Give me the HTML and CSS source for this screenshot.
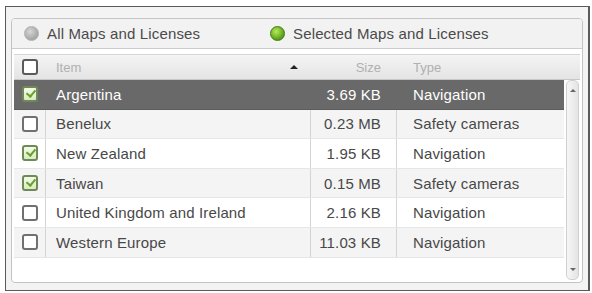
FILE: index.html
```html
<!DOCTYPE html>
<html lang="en">
<head>
    <meta charset="UTF-8">
    <title>Maps and Licenses</title>
    <link rel="stylesheet" href="styles.css">
</head>
<body>
    <div class="frame">
        <div class="panel">
            <div class="filter">
                <label class="option"><span class="radio"></span>All Maps and Licenses</label>
                <label class="option"><span class="radio on"></span>Selected Maps and Licenses</label>
            </div>
            <div class="grid">
                <div class="head">
                    <div class="c-check"><span class="box"></span></div>
                    <div class="c-item">Item <span class="sort"></span></div>
                    <div class="c-size">Size</div>
                    <div class="c-type">Type</div>
                </div>
                <div class="body">
                    <div class="rows">
                        <div class="row selected">
                            <div class="c-check"><span class="box checked"></span></div>
                            <div class="c-item">Argentina</div>
                            <div class="c-size">3.69 KB</div>
                            <div class="c-type">Navigation</div>
                        </div>
                        <div class="row">
                            <div class="c-check"><span class="box"></span></div>
                            <div class="c-item">Benelux</div>
                            <div class="c-size">0.23 MB</div>
                            <div class="c-type">Safety cameras</div>
                        </div>
                        <div class="row">
                            <div class="c-check"><span class="box checked"></span></div>
                            <div class="c-item">New Zealand</div>
                            <div class="c-size">1.95 KB</div>
                            <div class="c-type">Navigation</div>
                        </div>
                        <div class="row">
                            <div class="c-check"><span class="box checked"></span></div>
                            <div class="c-item">Taiwan</div>
                            <div class="c-size">0.15 MB</div>
                            <div class="c-type">Safety cameras</div>
                        </div>
                        <div class="row">
                            <div class="c-check"><span class="box"></span></div>
                            <div class="c-item">United Kingdom and Ireland</div>
                            <div class="c-size">2.16 KB</div>
                            <div class="c-type">Navigation</div>
                        </div>
                        <div class="row">
                            <div class="c-check"><span class="box"></span></div>
                            <div class="c-item">Western Europe</div>
                            <div class="c-size">11.03 KB</div>
                            <div class="c-type">Navigation</div>
                        </div>
                        <div class="filler"></div>
                    </div>
                    <div class="scrollbar">
                        <span class="arrow up"></span>
                        <span class="arrow down"></span>
                    </div>
                </div>
            </div>
        </div>
    </div>
</body>
</html>
```

FILE: styles.css
```css
body {
    margin: 0;
    background-color: #ffffff;
    font-family: "Liberation Sans", Arial, sans-serif;
    font-size: 15px;
    letter-spacing: 0.15px;
    color: #484848;
}

.frame {
    box-sizing: border-box;
    margin: 6px 2px 0 5px;
    height: 285px;
    border: 1px solid #5a5a5a;
    border-right-width: 2px;
    background-color: #f3f3f3;
    padding: 11px 5px 7px 5px;
}

.panel {
    height: 100%;
    box-sizing: border-box;
    border: 1px solid #c4c4c4;
    border-radius: 4px;
    background-color: #ffffff;
    display: flex;
    flex-direction: column;
    overflow: hidden;
}

.filter {
    display: flex;
    align-items: center;
    height: 29px;
    flex-shrink: 0;
    background-color: #f2f2f2;
    border-bottom: 1px solid #cccccc;
}

.option {
    display: flex;
    align-items: center;
    gap: 8px;
    color: #4a4a4a;
}

.option:first-child {
    margin-left: 12px;
    width: 246px;
}

.radio {
    width: 15px;
    height: 15px;
    border-radius: 50%;
    background: radial-gradient(circle at 40% 35%, #d6d6d6, #a6a6a6 70%);
    border: 1px solid #b0b0b0;
    box-sizing: border-box;
}

.radio.on {
    background: radial-gradient(circle at 40% 35%, #b8ea5a, #4f9a12 75%);
    border-color: #3f7a10;
}

.grid {
    flex: 1;
    display: flex;
    flex-direction: column;
    margin: 5px 2px 0 2px;
}

.head, .row {
    display: flex;
    align-items: center;
}

.head {
    height: 24px;
    flex-shrink: 0;
    background: linear-gradient(#f4f4f4, #e4e4e4);
    border-top: 1px solid #d6d6d6;
    border-bottom: 1px solid #c8c8c8;
    color: #b0b0b0;
    font-size: 13px;
    letter-spacing: 0;
}

.c-check {
    width: 32px;
    height: 100%;
    display: flex;
    align-items: center;
    justify-content: center;
    border-right: 1px solid #d4d4d4;
    box-sizing: border-box;
}

.c-item {
    width: 265px;
    padding-left: 10px;
    box-sizing: border-box;
    height: 100%;
    display: flex;
    align-items: center;
    justify-content: space-between;
    padding-right: 12px;
    border-right: 1px solid #d4d4d4;
}

.c-size {
    width: 86px;
    padding-right: 15px;
    box-sizing: border-box;
    height: 100%;
    display: flex;
    align-items: center;
    justify-content: flex-end;
    border-right: 1px solid #d4d4d4;
}

.c-type {
    padding-left: 16px;
}

.head .c-check, .head .c-item, .head .c-size {
    border-right-color: transparent;
}

.sort {
    width: 0;
    height: 0;
    border-left: 4px solid transparent;
    border-right: 4px solid transparent;
    border-bottom: 4px solid #222222;
}

.box {
    width: 16px;
    height: 16px;
    border: 2px solid #707070;
    border-radius: 3px;
    background: #ffffff;
    box-sizing: border-box;
    position: relative;
}

.head .box {
    border-color: #5a5a5a;
}

.box.checked {
    border-color: #6f8a58;
    background: linear-gradient(#f4fbe8, #d9ecc0);
}

.box.checked::after {
    content: "";
    position: absolute;
    left: 4px;
    top: 0px;
    width: 4px;
    height: 7px;
    border-right: 2px solid #6aa02c;
    border-bottom: 2px solid #6aa02c;
    transform: rotate(40deg);
}

.body {
    flex: 1;
    display: flex;
}

.rows {
    flex: 1;
    display: flex;
    flex-direction: column;
}

.row {
    height: 29.6px;
    flex-shrink: 0;
    background-color: #f4f4f4;
    border-bottom: 1px solid #e6e6e6;
    box-sizing: border-box;
}

.row:nth-child(odd) {
    background-color: #ffffff;
}

.row.selected {
    background-color: #696969;
    color: #ffffff;
    border-bottom-color: #5c5c5c;
}

.row.selected .c-check, .row.selected .c-item, .row.selected .c-size {
    border-right-color: #696969;
}

.filler {
    flex: 1;
    background-color: #ffffff;
}

.scrollbar {
    width: 11px;
    margin: 0 1px 2px 2px;
    border: 1px solid #d0d0d0;
    border-radius: 5px;
    background: linear-gradient(90deg, #f6f6f6, #e4e4e4);
    display: flex;
    flex-direction: column;
    justify-content: space-between;
    align-items: center;
    padding: 8px 0 8px;
}

.arrow {
    width: 0;
    height: 0;
    border-left: 3px solid transparent;
    border-right: 3px solid transparent;
}

.arrow.up {
    border-bottom: 3px solid #666666;
}

.arrow.down {
    border-top: 3px solid #666666;
}
```
